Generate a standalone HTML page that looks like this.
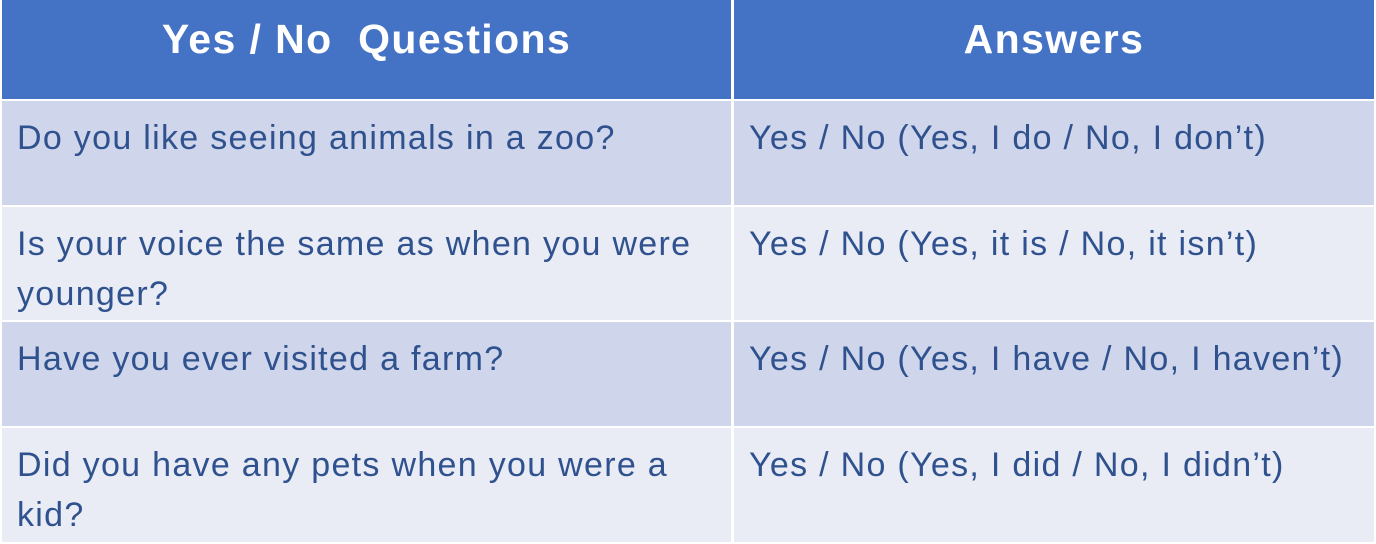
<!DOCTYPE html>
<html><head><style>
body{margin:0;width:1376px;height:544px;background:#fff;overflow:hidden;font-family:"Liberation Sans",sans-serif;}
.c{position:absolute;box-sizing:border-box;color:#2f528f;font-size:34px;letter-spacing:1.3px;line-height:50px;padding:12px 0 0 15px;white-space:nowrap;}
.h{position:absolute;background:#4472c4;color:#fff;font-weight:bold;font-size:41px;letter-spacing:1.4px;text-align:center;line-height:78px;}
.o{background:#cfd5ea}.e{background:#e9ebf5}
</style></head><body>
<div class="h" style="left:2px;top:0;width:729px;height:99px">Yes / No&nbsp; Questions</div>
<div class="h" style="left:734px;top:0;width:640px;height:99px">Answers</div>

<div class="c o" style="left:2px;top:101px;width:729px;height:104px">Do you like seeing animals in a zoo?</div>
<div class="c o" style="left:734px;top:101px;width:640px;height:104px">Yes / No (Yes, I do / No, I don’t)</div>

<div class="c e" style="left:2px;top:207px;width:729px;height:113px">Is your voice the same as when you were<br>younger?</div>
<div class="c e" style="left:734px;top:207px;width:640px;height:113px">Yes / No (Yes, it is / No, it isn’t)</div>

<div class="c o" style="left:2px;top:322px;width:729px;height:104px">Have you ever visited a farm?</div>
<div class="c o" style="left:734px;top:322px;width:640px;height:104px">Yes / No (Yes, I have / No, I haven’t)</div>

<div class="c e" style="left:2px;top:428px;width:729px;height:114px">Did you have any pets when you were a<br>kid?</div>
<div class="c e" style="left:734px;top:428px;width:640px;height:114px">Yes / No (Yes, I did / No, I didn’t)</div>
</body></html>
